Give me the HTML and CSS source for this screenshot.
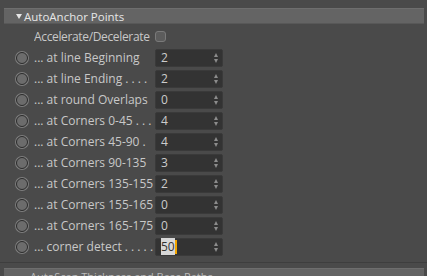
FILE: index.html
```html
<!DOCTYPE html>
<html lang="en">
<head>
    <meta charset="UTF-8">
    <title>AutoAnchor Points</title>
    <link rel="stylesheet" href="styles.css">
</head>
<body>
    <div class="group-head"><span class="arrow"></span>AutoAnchor Points</div>
    <div class="group">
        <div class="row check-row">
            <span class="label">Accelerate/Decelerate</span>
            <span class="checkbox"></span>
        </div>
        <div class="row"><span class="radio"></span><span class="label">... at line Beginning</span><span class="field">2</span></div>
        <div class="row"><span class="radio"></span><span class="label">... at line Ending . . . .</span><span class="field">2</span></div>
        <div class="row"><span class="radio"></span><span class="label">... at round Overlaps</span><span class="field">0</span></div>
        <div class="row"><span class="radio"></span><span class="label">... at Corners 0-45 . . .</span><span class="field">4</span></div>
        <div class="row"><span class="radio"></span><span class="label">... at Corners 45-90 .</span><span class="field">4</span></div>
        <div class="row"><span class="radio"></span><span class="label">... at Corners 90-135</span><span class="field">3</span></div>
        <div class="row"><span class="radio"></span><span class="label">... at Corners 135-155</span><span class="field">2</span></div>
        <div class="row"><span class="radio"></span><span class="label">... at Corners 155-165</span><span class="field">0</span></div>
        <div class="row"><span class="radio"></span><span class="label">... at Corners 165-175</span><span class="field">0</span></div>
        <div class="row"><span class="radio"></span><span class="label">... corner detect . . . . .</span><span class="field"><span class="sel">50</span><span class="caret"></span></span></div>
    </div>
    <div class="group-head next">AutoScan Thickness and Base Paths</div>
</body>
</html>
```
FILE: styles.css
```css
body {
    margin: 0;
    padding-top: 8px;
    background-color: #4a4a4a;
    font-family: "Open Sans", "Noto Sans", sans-serif;
    font-size: 12px;
    color: #c8c8c8;
    width: 427px;
    height: 276px;
    overflow: hidden;
}

.group-head {
    display: flex;
    align-items: center;
    margin: 0 3px 0 4px;
    height: 14px;
    background-color: #646464;
    border-top: 1px solid #6e6e6e;
    border-bottom: 1px solid #585858;
    color: #e6e6e6;
    font-size: 11.5px;
    padding-left: 12px;
    white-space: nowrap;
}

/* triangle of the open group */
.arrow {
    width: 0;
    height: 0;
    border-left: 3.5px solid transparent;
    border-right: 3.5px solid transparent;
    border-top: 5px solid #e6e6e6;
    margin-right: 2px;
}

.group {
    padding: 3px 0 5px 0;
    border-bottom: 1px solid #3e3e3e;
}

.row {
    display: flex;
    align-items: center;
    height: 21px;
    padding-left: 16px;
}

.check-row {
    padding-left: 34px;
    height: 18px;
    margin-bottom: 2px;
}

.check-row .label {
    width: auto;
    letter-spacing: -0.35px;
    margin-right: 5px;
}

.radio {
    width: 10px;
    height: 10px;
    border-radius: 50%;
    border: 1px solid #2c2c2c;
    background-color: #6c6c6c;
    box-shadow: 0 0 0 1px #7e7e7e;
    margin-right: 6px;
}

.label {
    width: 121px;
    white-space: nowrap;
    overflow: hidden;
}

.checkbox {
    width: 9px;
    height: 9px;
    border-radius: 3px;
    background-color: #5c5c5c;
    border: 1px solid #7a7a7a;
}

.field {
    position: relative;
    width: 61px;
    height: 16px;
    line-height: 16px;
    padding-left: 5px;
    background-color: #333333;
    border: 1px solid #3a3a3a;
    border-radius: 2px;
    color: #cccccc;
}

/* spinner arrows */
.field::before,
.field::after {
    content: "";
    position: absolute;
    right: 4px;
    width: 0;
    height: 0;
    border-left: 2.5px solid transparent;
    border-right: 2.5px solid transparent;
}

.field::before {
    top: 3px;
    border-bottom: 4px solid #8c8c8c;
}

.field::after {
    top: 9px;
    border-top: 4px solid #8c8c8c;
}

.sel {
    background-color: #d8d8d8;
    color: #333;
}

.caret {
    display: inline-block;
    width: 2px;
    height: 14px;
    vertical-align: middle;
    background-color: #f2a500;
}

.next {
    margin-top: 5px;
    color: #bbb;
    font-size: 11px;
    padding-left: 26px;
}
```
